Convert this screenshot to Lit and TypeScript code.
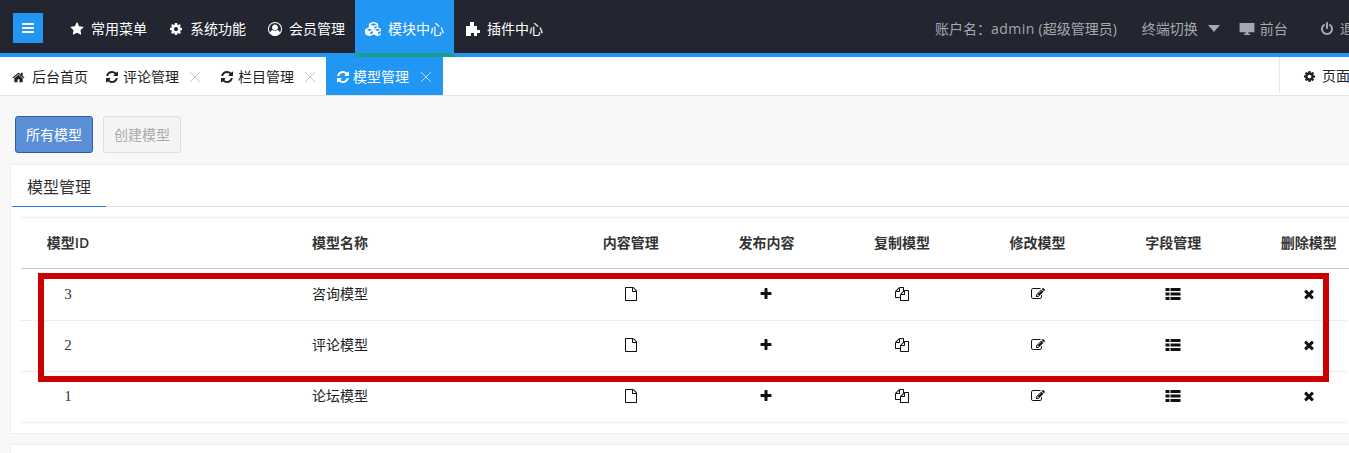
import { LitElement, html, css, svg } from "lit";
import { customElement } from "lit/decorators.js";

const P: Record<string, string> = {
  bars: "M1664 1344v128q0 26-19 45t-45 19h-1408q-26 0-45-19t-19-45v-128q0-26 19-45t45-19h1408q26 0 45 19t19 45zm0-512v128q0 26-19 45t-45 19h-1408q-26 0-45-19t-19-45v-128q0-26 19-45t45-19h1408q26 0 45 19t19 45zm0-512v128q0 26-19 45t-45 19h-1408q-26 0-45-19t-19-45v-128q0-26 19-45t45-19h1408q26 0 45 19t19 45z",
  star: "M1728 647q0 22-26 48l-363 354 86 500q1 7 1 20 0 21-10.500 35.500t-30.500 14.500q-19 0-40-12l-449-236-449 236q-22 12-40 12-21 0-31.500-14.500t-10.500-35.500q0-6 2-20l86-500-364-354q-25-27-25-48 0-37 56-46l502-73 225-455q19-41 49-41t49 41l225 455 502 73q56 9 56 46z",
  cog: "M1152 896q0-106-75-181t-181-75-181 75-75 181 75 181 181 75 181-75 75-181zm512-109v222q0 12-8 23t-20 13l-185 28q-19 54-39 91 35 50 107 138 10 12 10 25t-9 23q-27 37-99 108t-94 71q-12 0-26-9l-138-108q-44 23-91 38-16 136-29 186-7 28-36 28h-222q-14 0-24.500-8.500t-11.500-21.500l-28-184q-49-16-90-37l-141 107q-10 9-25 9-14 0-25-11-126-114-165-168-7-10-7-23 0-12 8-23 15-21 51-66.500t54-70.500q-27-50-41-99l-183-27q-13-2-21-12.500t-8-23.500v-222q0-12 8-23t19-13l186-28q14-46 39-92-40-57-107-138-10-12-10-24 0-10 9-23 26-36 98.500-107.500t94.500-71.500q13 0 26 10l138 107q44-23 91-38 16-136 29-186 7-28 36-28h222q14 0 24.500 8.500t11.500 21.500l28 184q49 16 90 37l142-107q9-9 24-9 13 0 25 10 129 119 165 170 7 8 7 22 0 12-8 23-15 21-51 66.500t-54 70.500q26 50 41 98l183 28q13 2 21 12.500t8 23.500z",
  user: "M896 0q182 0 348 71t286 191 191 286 71 348q0 181-70.500 347t-190.500 286-286 191.500-349 71.500-349-71-285.500-191.500-190.500-286-71-347.500 71-348 191-286 286-191 348-71zm619 1351q149-205 149-455 0-156-61-298t-164-245-245-164-298-61-298 61-245 164-164 245-61 298q0 250 149 455 66-327 306-327 131 128 313 128t313-128q240 0 306 327zm-235-647q0-159-112.500-271.500t-271.500-112.500-271.500 112.500-112.500 271.500 112.500 271.500 271.500 112.500 271.500-112.500 112.500-271.500z",
  refresh: "M1639 1056q0 5-1 7-64 268-268 434.500t-478 166.500q-146 0-282.500-55t-243.500-157l-129 129q-19 19-45 19t-45-19-19-45v-448q0-26 19-45t45-19h448q26 0 45 19t19 45-19 45l-137 137q71 66 161 102t187 36q134 0 250-65t186-179q11-17 53-117 8-23 30-23h192q13 0 22.500 9.500t9.500 22.500zm25-800v448q0 26-19 45t-45 19h-448q-26 0-45-19t-19-45 19-45l138-138q-148-137-349-137-134 0-250 65t-186 179q-11 17-53 117-8 23-30 23h-199q-13 0-22.500-9.500t-9.500-22.500v-7q65-268 270-434.500t480-166.500q146 0 284 55.500t245 156.500l130-129q19-19 45-19t45 19 19 45z",
  home: "M1472 992v480q0 26-19 45t-45 19h-384v-384h-256v384h-384q-26 0-45-19t-19-45v-480q0-1 .5-3t.5-3l575-474 575 474q1 2 1 6zm223-69l-62 74q-8 9-21 11h-3q-13 0-21-7l-692-577-692 577q-12 8-24 7-13-2-21-11l-62-74q-8-10-7-23.500t11-21.500l719-599q32-26 76-26t76 26l244 204v-195q0-14 9-23t23-9h192q14 0 23 9t9 23v408l219 182q10 8 11 21.500t-7 23.500z",
  plus: "M1600 736v192q0 40-28 68t-68 28h-416v416q0 40-28 68t-68 28h-192q-40 0-68-28t-28-68v-416h-416q-40 0-68-28t-28-68v-192q0-40 28-68t68-28h416v-416q0-40 28-68t68-28h192q40 0 68 28t28 68v416h416q40 0 68 28t28 68z",
  times: "M1490 1322q0 40-28 68l-136 136q-28 28-68 28t-68-28l-294-294-294 294q-28 28-68 28t-68-28l-136-136q-28-28-28-68t28-68l294-294-294-294q-28-28-28-68t28-68l136-136q28-28 68-28t68 28l294 294 294-294q28-28 68-28t68 28l136 136q28 28 28 68t-28 68l-294 294 294 294q28 28 28 68z",
  file: "M1596 380q28 28 48 76t20 88v1152q0 40-28 68t-68 28h-1344q-40 0-68-28t-28-68v-1600q0-40 28-68t68-28h896q40 0 88 20t76 48zm-444-244v376h376q-10-29-22-41l-313-313q-12-12-41-22zm384 1528v-1024h-416q-40 0-68-28t-28-68v-416h-768v1536h1280z",
  files: "M1696 384q40 0 68 28t28 68v1216q0 40-28 68t-68 28h-960q-40 0-68-28t-28-68v-288h-544q-40 0-68-28t-28-68v-672q0-40 20-88t48-76l408-408q28-28 76-48t88-20h416q40 0 68 28t28 68v328q68-40 128-40h416zm-544 213l-299 299h299v-299zm-640-384l-299 299h299v-299zm196 647l316-316v-416h-384v416q0 40-28 68t-68 28h-416v640h512v-256q0-40 20-88t48-76zm956 804v-1152h-384v416q0 40-28 68t-68 28h-416v640h896z",
  edit: "M888 1184l116-116-152-152-116 116v56h96v96h56zm440-720q-16-16-33 1l-350 350q-17 17-1 33t33-1l350-350q17-17 1-33zm80 594v190q0 119-84.500 203.500t-203.500 84.500h-832q-119 0-203.500-84.500t-84.500-203.500v-832q0-119 84.500-203.500t203.500-84.500h832q63 0 117 25 15 7 18 23 3 17-9 29l-49 49q-14 14-32 8-23-6-45-6h-832q-66 0-113 47t-47 113v832q0 66 47 113t113 47h832q66 0 113-47t47-113v-126q0-13 9-22l64-64q15-15 35-7t20 29zm-96-738l288 288-672 672h-288v-288zm444 132l-92 92-288-288 92-92q28-28 68-28t68 28l152 152q28 28 28 68t-28 68z",
  power: "M1664 896q0 156-61 298t-164 245-245 164-298 61-298-61-245-164-164-245-61-298q0-182 80.500-343t226.500-270q43-32 95.500-25t83.500 50q32 42 24.500 94.500t-49.500 84.500q-98 74-151.500 181t-53.500 228q0 104 40.500 198.500t109.500 163.500 163.500 109.500 198.500 40.500 198.500-40.500 163.500-109.500 109.500-163.500 40.500-198.500q0-121-53.500-228t-151.500-181q-42-32-49.500-84.500t24.500-94.500q31-43 84-50t95 25q146 109 226.500 270t80.500 343zm-640-768v640q0 52-38 90t-90 38-90-38-38-90v-640q0-52 38-90t90-38 90 38 38 90z",
  list: "M56 224h448v336h-448zM616 224h1120v336h-1120zM56 728h448v336h-448zM616 728h1120v336h-1120zM56 1232h448v336h-448zM616 1232h1120v336h-1120z",
  desktop: "M64 224h1664v1024h-1664zM736 1248h320v192h192v128h-704v-128h192z",
  puzzle: "M0 512H512V0H1024V512H1408V1024H1792V1408H1408V1792H1024V1408H640V1792H0Z",
  cubes: "M640 1632l384-192v-314l-384 164v342zm-64-454l404-173-404-173-404 173zm1088 454l384-192v-314l-384 164v342zm-64-454l404-173-404-173-404 173zm-448-293l384-165v-266l-384 164v267zm-64-379l441-189-441-189-441 189zm1088 518v416q0 36-19 67t-52 47l-448 224q-25 14-57 14t-57-14l-448-224q-4-2-7-4-2 2-7 4l-448 224q-25 14-57 14t-57-14l-448-224q-33-16-52-47t-19-67v-416q0-38 21.500-70t56.500-48l434-186v-400q0-38 21.500-70t56.500-48l448-192q23-10 50-10t50 10l448 192q35 16 56.500 48t21.500 70v400l434 186q36 16 57 48t21 70z",
};
const icon = (n: string, size = 14) => {
  const vw = n === "cubes" ? 2048 : 1792;
  return html`<svg class="ic i-${n}" width=${Math.round((size * vw) / 1792)} height=${size} viewBox="0 0 ${vw} 1792" fill="currentColor">${svg`<path d=${P[n]}></path>`}</svg>`;
};
const x = () => html`<svg class="close" width="12" height="12" viewBox="0 0 12 12" fill="none" stroke="currentColor"><path d="M1 1l10 10M11 1L1 11"></path></svg>`;

@customElement("app-root")
export class AppRoot extends LitElement {
  static styles = css`
    :host { display: block; position: relative; width: 100%; height: 453px; overflow: hidden; background: #f8f8f8; color: #333;
      font: 14px/20px "Open Sans", "Noto Sans CJK SC", sans-serif; }
    .ic { display: block; flex: none; }
    .i-cubes path { stroke: currentColor; stroke-width: 50; }
    .top { display: flex; height: 53px; background: #232630; border-bottom: 4px solid #2196f3; white-space: nowrap; color: #fff; }
    .burger { flex: none; width: 30px; height: 30px; margin: 13px 17px 0 13px; background: #2196f3; display: flex; align-items: center; justify-content: center; }
    .nav { display: flex; align-items: center; gap: 7px; height: 53px; box-sizing: border-box; padding: 4px 10px 0; margin-right: 2px; flex: none; }
    .nav.on { background: #2196f3; height: 57px; border-bottom: 4px solid #1b9e8f; width: 99px; margin-left: -2px; }
    .right { display: flex; align-items: center; height: 53px; box-sizing: border-box; padding-top: 4px; color: #a5a8ae; margin-left: 380px; flex: none; }
    .admin { letter-spacing: 0.5px; }
    .term { margin-left: 25px; }
    .caret { width: 0; height: 0; border: 6px solid transparent; border-top: 7px solid #a5a8ae; border-bottom: 0; margin: 0 19px 0 10px; }
    .right .ic { margin-right: 5px; }
    .space { width: 32px; }
    .quit { margin-left: 1px; }
    .tabs { display: flex; height: 38px; background: #fff; border-bottom: 1px solid #e2e2e2; white-space: nowrap; color: #222; }
    .tab { display: flex; align-items: center; flex: none; height: 38px; box-sizing: border-box; padding-top: 2px; }
    .tab .close { color: #c4c4c4; margin-left: 6px; }
    .home { padding-left: 12px; gap: 7px; width: 105px; }
    .t { width: 115px; gap: 4px; }
    .t.second { width: 106px; }
    .t.act { background: #2196f3; color: #fff; width: 117px; padding-left: 10px; gap: 3px; }
    .t.act .close { color: #b9dcf8; margin-left: 8px; }
    .pageopt { margin-left: 836px; border-left: 1px solid #e6e6e6; height: 36px; padding-left: 23px; gap: 6px; }
    .btns { display: flex; gap: 10px; padding: 20px 15px 0; }
    .btn { width: 78px; height: 37px; box-sizing: border-box; border-radius: 3px; border: 1px solid #2a5fa5; background: #5a8fd5; color: #fff; display: flex; align-items: center; justify-content: center; }
    .btn.off { background: #f4f4f4; border-color: #dedede; color: #aaa; }
    .panel { margin: 11px -40px 0 10px; background: #fff; border: 1px solid #eee; height: 270px; box-sizing: border-box; padding: 0 0 0 1px; }
    .panel.next { height: 40px; margin-top: 10px; }
    .ptabs { height: 41px; border-bottom: 1px solid #dde0f2; }
    .ptab { width: 94px; height: 42px; box-sizing: border-box; border-bottom: 1px solid #2a7de1; font-size: 16px; line-height: 45px; padding-left: 15px; color: #333; }
    .table { margin: 10px 0 0 9px; border-top: 1px solid #eee; }
    .row { display: grid; grid-template-columns: 291px 251px repeat(6, 135.6px); height: 51px; box-sizing: border-box; padding-bottom: 2px; align-items: center; border-bottom: 1px dotted #ddd; color: #222; }
    .row.first { height: 52px; }
    .row.head { padding-bottom: 1px; border-bottom: 1px solid #ccc; font-weight: 600; color: #333; }
    .id { width: 94px; text-align: center; }
    .num { font-family: "Liberation Serif", serif; font-size: 15px; color: #333; }
    .hc { text-align: center; }
    .c { display: flex; justify-content: center; color: #111; }
    .mark { position: absolute; left: 38px; top: 273px; width: 1291px; height: 109px; box-sizing: border-box; border: 6px solid #cc0000; pointer-events: none; }
  `;

  render() {
    const nav: [string, string, boolean][] = [["star", "常用菜单", false], ["cog", "系统功能", false], ["user", "会员管理", false], ["cubes", "模块中心", true], ["puzzle", "插件中心", false]];
    const rows = [["3", "咨询模型"], ["2", "评论模型"], ["1", "论坛模型"]];
    const heads = ["内容管理", "发布内容", "复制模型", "修改模型", "字段管理", "删除模型"];
    const acts = ["file", "plus", "files", "edit", "list", "times"];
    return html`
      <div class="top">
        <div class="burger">${icon("bars", 14)}</div>
        ${nav.map(([i, t, on]) => html`<div class="nav ${on ? "on" : ""}">${icon(i, 14)}<span>${t}</span></div>`)}
        <div class="right">
          <span>账户名：<span class="admin">admin</span> (超级管理员)</span>
          <span class="term">终端切换</span><i class="caret"></i>
          ${icon("desktop", 16)}<span>前台</span>
          <span class="space"></span>${icon("power", 14)}<span class="quit">退出</span>
        </div>
      </div>
      <div class="tabs">
        <div class="tab home">${icon("home", 13)}<span>后台首页</span></div>
        <div class="tab t">${icon("refresh")}<span>评论管理</span>${x()}</div>
        <div class="tab t second">${icon("refresh")}<span>栏目管理</span>${x()}</div>
        <div class="tab t act">${icon("refresh")}<span>模型管理</span>${x()}</div>
        <div class="tab pageopt">${icon("cog", 13)}<span>页面操作</span></div>
      </div>
      <div class="btns"><div class="btn">所有模型</div><div class="btn off">创建模型</div></div>
      <div class="panel">
        <div class="ptabs"><div class="ptab">模型管理</div></div>
        <div class="table">
          <div class="row head"><div class="id">模型ID</div><div>模型名称</div>${heads.map((h) => html`<div class="hc">${h}</div>`)}</div>
          ${rows.map(([id, name], i) => html`<div class="row ${i === 0 ? "first" : ""}"><div class="id num">${id}</div><div>${name}</div>${acts.map((a) => html`<div class="c">${icon(a, a === "list" ? 16 : 14)}</div>`)}</div>`)}
        </div>
      </div>
      <div class="panel next"></div>
      <div class="mark"></div>
    `;
  }
}
